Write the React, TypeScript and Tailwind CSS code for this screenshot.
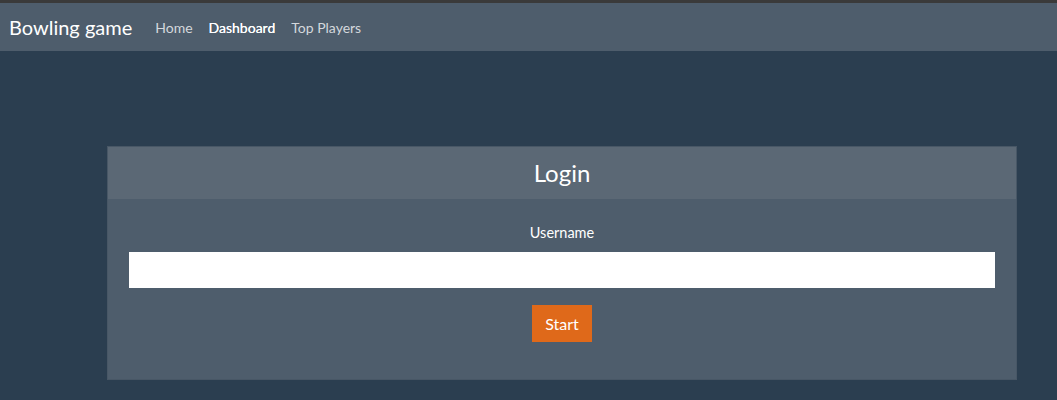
export default function App() {
  return (
    <div className="min-h-[400px] bg-[#2b3e50] font-['Lato','Liberation_Sans',sans-serif] text-white">
      <div className="h-[3px] bg-[#3a3a3a]" />
      <nav className="flex h-[48px] items-center bg-[#4e5d6c] px-[9px]">
        <span className="mr-[23px] text-[20px] leading-none text-white">Bowling game</span>
        <div className="flex items-center gap-[16px] text-[14px]">
          <a className="text-[#d4d8dc]">Home</a>
          <a className="text-white [text-shadow:0_0_0.4px_#fff]">Dashboard</a>
          <a className="text-[#d4d8dc]">Top Players</a>
        </div>
      </nav>
      <div className="pt-[95px] pl-[107px]">
        <section className="w-[910px] border border-[#485766] bg-[#4e5d6c]">
          <div className="flex h-[52px] items-center justify-center bg-[#5b6875] text-[24px]">Login</div>
          <div className="flex flex-col items-center px-[21px] pt-[26px] pb-[37px]">
            <label className="text-[14.5px] leading-[15px] text-white">Username</label>
            <input className="mt-[12px] h-[36px] w-full bg-white px-3 text-[14px] text-black outline-none" />
            <button className="mt-[17px] h-[37px] w-[60px] bg-[#df691a] text-[16px] text-white">Start</button>
          </div>
        </section>
      </div>
    </div>
  );
}
